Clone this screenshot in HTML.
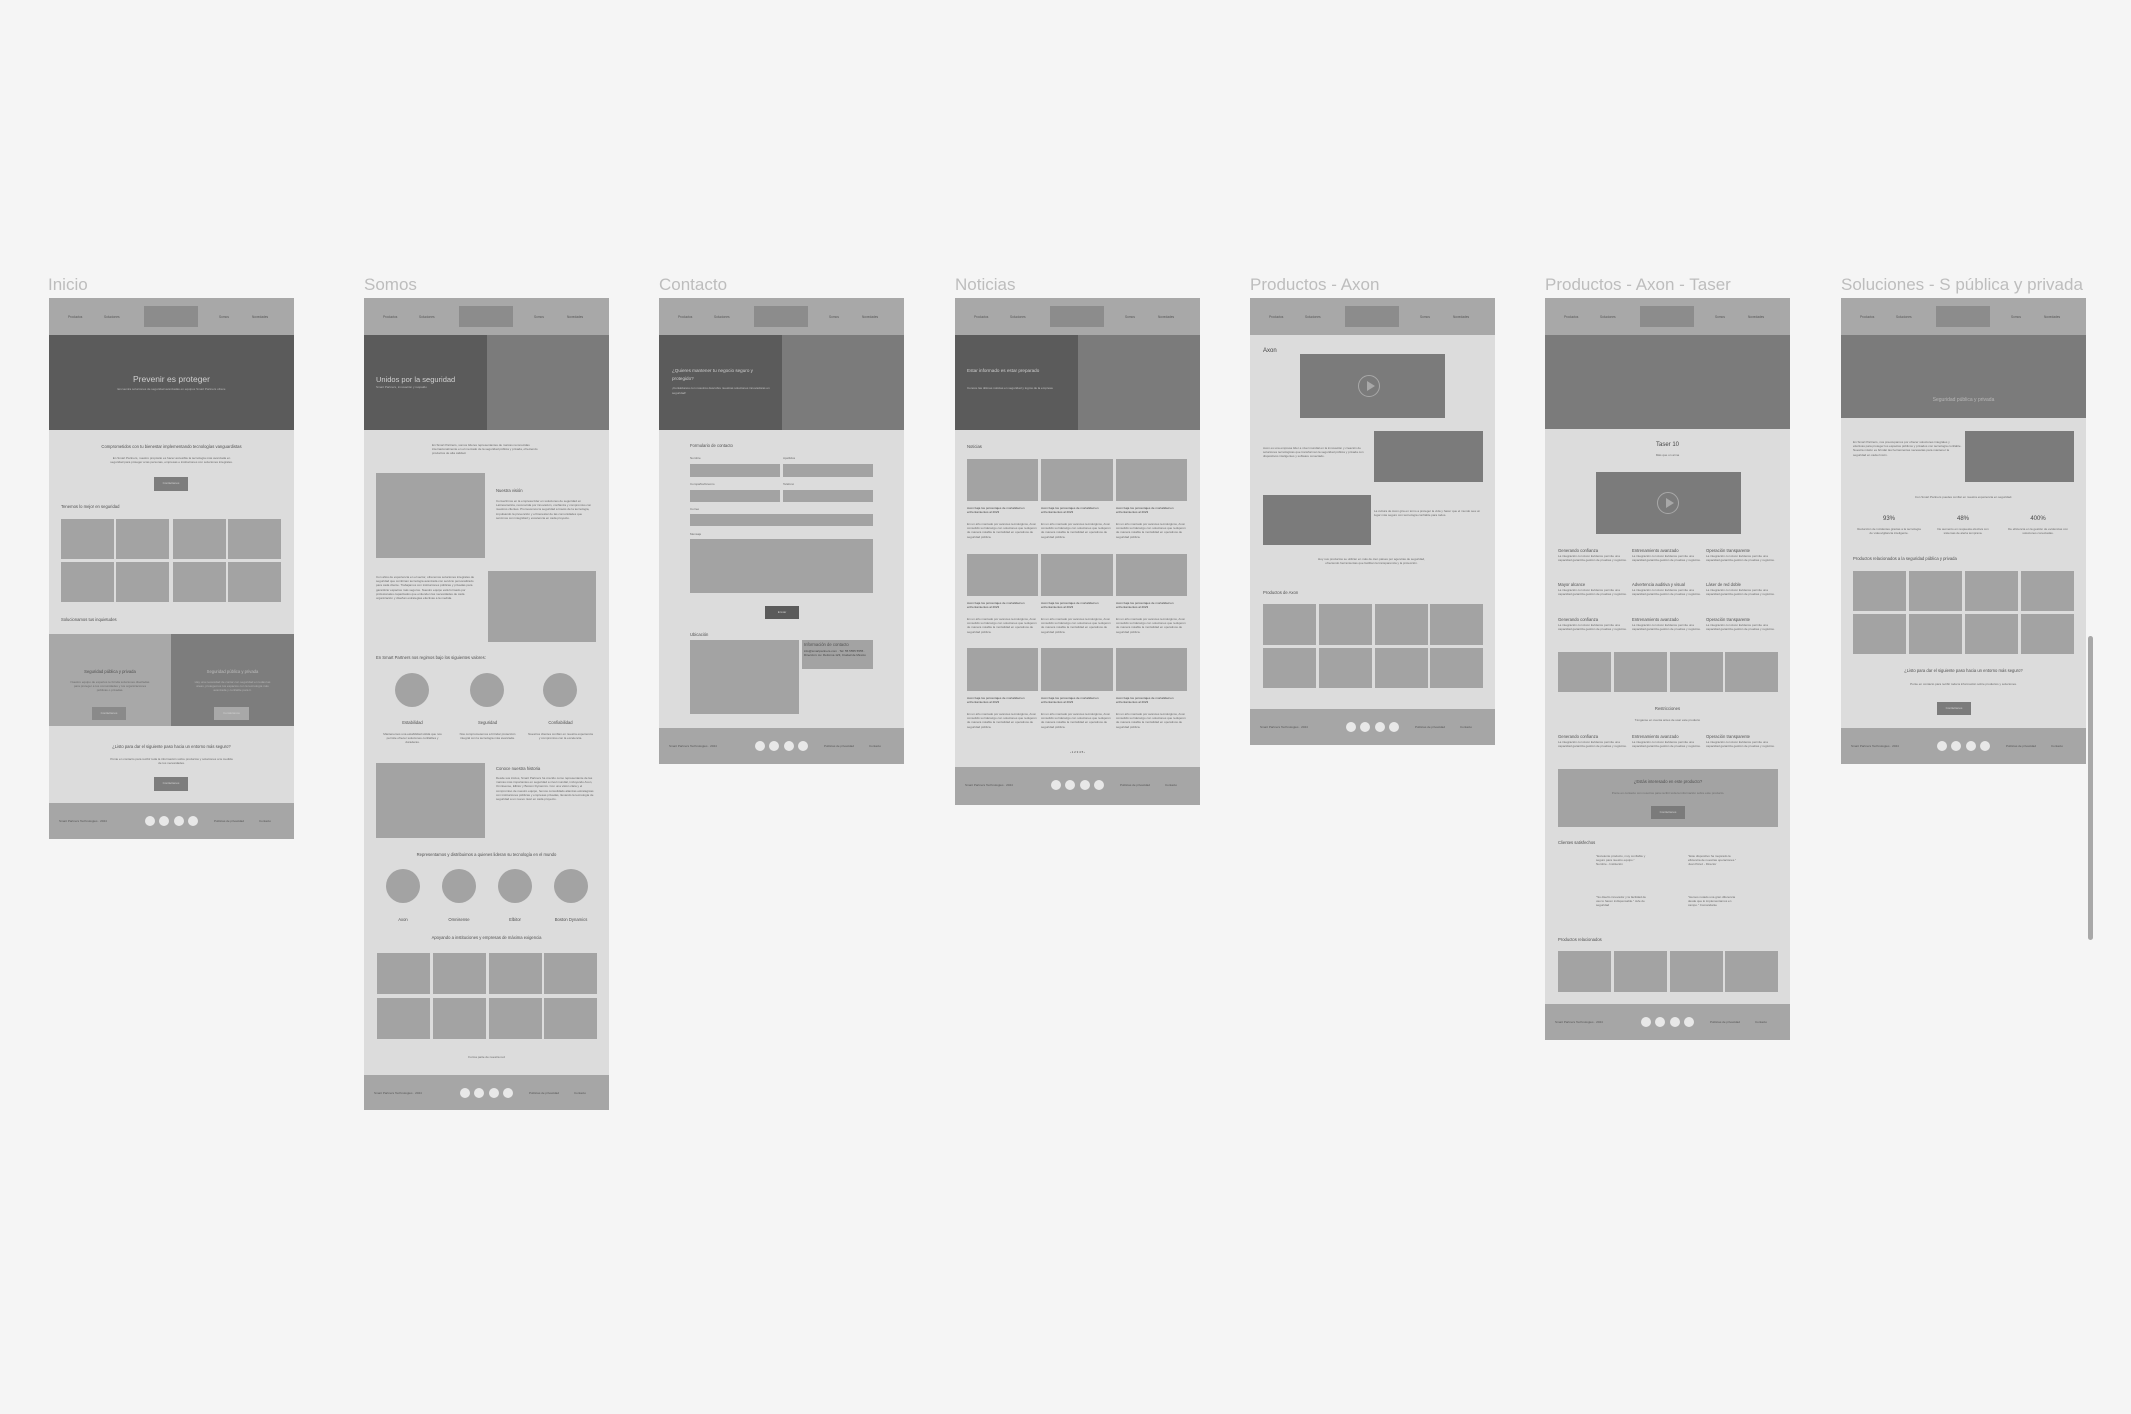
<!DOCTYPE html>
<html><head><meta charset="utf-8">
<style>
*{margin:0;padding:0;box-sizing:border-box}
body{width:2131px;height:1414px;background:#f5f5f5;position:relative;overflow:hidden;font-family:"Liberation Sans",sans-serif}
.a{position:absolute}
.lbl{position:absolute;top:275px;font-size:17px;color:#bdbdbd;white-space:nowrap}
.f{position:absolute;top:298px;width:245px;background:#dcdcdc;overflow:hidden}
.nav{position:absolute;left:0;top:0;width:245px;height:37px;background:#a8a8a8}
.nav .lg{position:absolute;left:95px;top:8px;width:54px;height:21px;background:#8c8c8c}
.nav span{position:absolute;top:17px;font-size:3.2px;color:#555;white-space:nowrap}
.ft{position:absolute;left:0;width:245px;height:36px;background:#a6a6a6}
.ft i{position:absolute;top:13px;width:10px;height:10px;border-radius:50%;background:#e8e8e8}
.ft span{position:absolute;top:16px;font-size:3px;color:#555;white-space:nowrap}
.t{position:absolute;font-size:3px;line-height:4.2px;color:#6a6a6a;overflow:hidden}
.c{text-align:center}
.h{position:absolute;font-size:4.2px;color:#505050;white-space:nowrap}
.b{position:absolute;background:#a3a3a3}
.d{position:absolute;background:#7b7b7b}
.btn{position:absolute;background:#7d7d7d;color:#d0d0d0;font-size:3px;text-align:center;line-height:13px;height:13px}
.cir{position:absolute;border-radius:50%;background:#a3a3a3}
.play{position:absolute;width:22px;height:22px;border-radius:50%;border:1.5px solid #a8a8a8}
.play:after{content:"";position:absolute;left:7.5px;top:5px;border-left:8px solid #a8a8a8;border-top:5px solid transparent;border-bottom:5px solid transparent}
</style></head><body>

<div class="lbl" style="left:48px">Inicio</div>
<div class="lbl" style="left:364px">Somos</div>
<div class="lbl" style="left:659px">Contacto</div>
<div class="lbl" style="left:955px">Noticias</div>
<div class="lbl" style="left:1250px">Productos - Axon</div>
<div class="lbl" style="left:1545px">Productos - Axon - Taser</div>
<div class="lbl" style="left:1841px">Soluciones - S pública y privada</div>

<div class="a" style="left:2088px;top:636px;width:5px;height:304px;border-radius:3px;background:#a8a8a8"></div>

<!-- INICIO -->
<div class="f" style="left:49px;height:541px">
 <div class="nav"><span style="left:19px">Productos</span><span style="left:55px">Soluciones</span><div class="lg"></div><span style="left:170px">Somos</span><span style="left:203px">Novedades</span></div>
 <div class="a" style="left:0;top:37px;width:245px;height:95px;background:#5b5b5b"></div>
 <div class="a c" style="left:0;top:76px;width:245px;font-size:8.5px;color:#cfcfcf">Prevenir es proteger</div>
 <div class="a c" style="left:0;top:89px;width:245px;font-size:3px;color:#b8b8b8">Encuentra soluciones de seguridad avanzadas en equipos Smart Partners ofrece</div>
 <div class="h c" style="left:0;top:146px;width:245px">Comprometidos con tu bienestar implementando tecnologías vanguardistas</div>
 <div class="t c" style="left:60px;top:158px;width:125px;height:13px">En Smart Partners, nuestro propósito es hacer accesible la tecnología más avanzada en seguridad para proteger a las personas, empresas e instituciones con soluciones integrales.</div>
 <div class="btn" style="left:105px;top:179px;width:34px;height:14px">Contáctanos</div>
 <div class="h" style="left:12px;top:206px">Tenemos lo mejor en seguridad</div>
 <div class="b" style="left:12px;top:221px;width:53px;height:40px"></div><div class="b" style="left:67px;top:221px;width:53px;height:40px"></div><div class="b" style="left:124px;top:221px;width:53px;height:40px"></div><div class="b" style="left:179px;top:221px;width:53px;height:40px"></div>
 <div class="b" style="left:12px;top:264px;width:53px;height:40px"></div><div class="b" style="left:67px;top:264px;width:53px;height:40px"></div><div class="b" style="left:124px;top:264px;width:53px;height:40px"></div><div class="b" style="left:179px;top:264px;width:53px;height:40px"></div>
 <div class="h" style="left:12px;top:319px">Solucionamos tus inquietudes</div>
 <div class="a" style="left:0;top:336px;width:122px;height:92px;background:#a8a8a8"></div>
 <div class="a" style="left:122px;top:336px;width:123px;height:92px;background:#7d7d7d"></div>
 <div class="h c" style="left:0;top:371px;width:122px">Seguridad pública y privada</div>
 <div class="t c" style="left:20px;top:382px;width:82px;height:17px">Nuestro equipo de expertos te brinda soluciones diseñadas para proteger a tus comunidades y tus organizaciones públicas o privadas.</div>
 <div class="btn" style="left:43px;top:409px;width:34px;background:#8a8a8a">Contáctanos</div>
 <div class="h c" style="left:122px;top:371px;width:123px;color:#bcbcbc">Seguridad pública y privada</div>
 <div class="t c" style="left:142px;top:382px;width:83px;height:17px;color:#b5b5b5">Hay una necesidad de contar con seguridad en todas las áreas, protegemos tus espacios con la tecnología más avanzada y confiable para ti.</div>
 <div class="btn" style="left:165px;top:409px;width:35px;background:#a8a8a8">Contáctanos</div>
 <div class="h c" style="left:0;top:446px;width:245px">¿Listo para dar el siguiente paso hacia un entorno más seguro?</div>
 <div class="t c" style="left:60px;top:459px;width:125px;height:9px">Ponte en contacto para recibir toda la información sobre productos y soluciones a la medida de tus necesidades.</div>
 <div class="btn" style="left:105px;top:479px;width:34px;height:14px">Contáctanos</div>
 <div class="ft" style="top:505px"><span style="left:10px">Smart Partners Technologies · 2024</span><i style="left:96px"></i><i style="left:110px"></i><i style="left:125px"></i><i style="left:139px"></i><span style="left:165px">Políticas de privacidad</span><span style="left:210px">Contacto</span></div>
</div>

<!-- SOMOS -->
<div class="f" style="left:364px;height:812px">
 <div class="nav"><span style="left:19px">Productos</span><span style="left:55px">Soluciones</span><div class="lg"></div><span style="left:170px">Somos</span><span style="left:203px">Novedades</span></div>
 <div class="a" style="left:0;top:37px;width:123px;height:95px;background:#5b5b5b"></div>
 <div class="a" style="left:123px;top:37px;width:122px;height:95px;background:#7b7b7b"></div>
 <div class="a" style="left:12px;top:77px;font-size:7.5px;color:#d0d0d0;white-space:nowrap">Unidos por la seguridad</div>
 <div class="a" style="left:12px;top:87px;font-size:3px;color:#bbb">Smart Partners, innovación y respaldo</div>
 <div class="t" style="left:68px;top:145px;width:110px;height:18px">En Smart Partners, somos líderes representantes de marcas reconocidas internacionalmente en el mercado de la seguridad pública y privada, ofreciendo productos de alta calidad.</div>
 <div class="b" style="left:12px;top:175px;width:109px;height:85px"></div>
 <div class="h" style="left:132px;top:190px">Nuestra visión</div>
 <div class="t" style="left:132px;top:201px;width:98px;height:47px">Convertirnos en la empresa líder en soluciones de seguridad en Latinoamérica, reconocida por innovación, confianza y compromiso con nuestros clientes. Promovemos la seguridad a través de la tecnología, impulsando la prevención y el bienestar de las comunidades que servimos con integridad y excelencia en cada proyecto.</div>
 <div class="t" style="left:12px;top:277px;width:100px;height:62px">Con años de experiencia en el sector, ofrecemos soluciones integrales de seguridad que combinan tecnología avanzada con servicio personalizado para cada cliente. Trabajamos con instituciones públicas y privadas para garantizar espacios más seguros. Nuestro equipo está formado por profesionales capacitados que entienden las necesidades de cada organización y diseñan estrategias efectivas a la medida.</div>
 <div class="b" style="left:124px;top:273px;width:108px;height:71px"></div>
 <div class="h" style="left:12px;top:357px">En Smart Partners nos regimos bajo los siguientes valores:</div>
 <div class="cir" style="left:31px;top:375px;width:34px;height:34px"></div><div class="cir" style="left:106px;top:375px;width:34px;height:34px"></div><div class="cir" style="left:179px;top:375px;width:34px;height:34px"></div>
 <div class="h c" style="left:16px;top:422px;width:65px">Estabilidad</div><div class="h c" style="left:91px;top:422px;width:65px">Seguridad</div><div class="h c" style="left:164px;top:422px;width:65px">Confiabilidad</div>
 <div class="t c" style="left:16px;top:434px;width:65px;height:17px">Mantenemos una estabilidad sólida que nos permite ofrecer soluciones confiables y duraderas.</div>
 <div class="t c" style="left:91px;top:434px;width:65px;height:17px">Nos comprometemos a brindar protección integral con la tecnología más avanzada.</div>
 <div class="t c" style="left:164px;top:434px;width:65px;height:17px">Nuestros clientes confían en nuestra experiencia y compromiso con la excelencia.</div>
 <div class="b" style="left:12px;top:465px;width:109px;height:75px"></div>
 <div class="h" style="left:132px;top:468px">Conoce nuestra historia</div>
 <div class="t" style="left:132px;top:478px;width:98px;height:58px">Desde sus inicios, Smart Partners ha crecido como representante de las marcas más importantes en seguridad a nivel mundial, incluyendo Axon, Omnisense, Elbitor y Boston Dynamics. Con una visión clara y el compromiso de nuestro equipo, hemos consolidado alianzas estratégicas con instituciones públicas y empresas privadas, llevando la tecnología de seguridad a un nuevo nivel en cada proyecto.</div>
 <div class="h c" style="left:0;top:554px;width:245px">Representamos y distribuimos a quienes lideran su tecnología en el mundo</div>
 <div class="cir" style="left:22px;top:571px;width:34px;height:34px"></div><div class="cir" style="left:78px;top:571px;width:34px;height:34px"></div><div class="cir" style="left:134px;top:571px;width:34px;height:34px"></div><div class="cir" style="left:190px;top:571px;width:34px;height:34px"></div>
 <div class="h c" style="left:9px;top:619px;width:60px">Axon</div><div class="h c" style="left:65px;top:619px;width:60px">Omnisense</div><div class="h c" style="left:121px;top:619px;width:60px">Elbitor</div><div class="h c" style="left:177px;top:619px;width:60px">Boston Dynamics</div>
 <div class="h c" style="left:0;top:637px;width:245px">Apoyando a instituciones y empresas de máxima exigencia</div>
 <div class="b" style="left:13px;top:655px;width:53px;height:41px"></div><div class="b" style="left:69px;top:655px;width:53px;height:41px"></div><div class="b" style="left:125px;top:655px;width:53px;height:41px"></div><div class="b" style="left:180px;top:655px;width:53px;height:41px"></div>
 <div class="b" style="left:13px;top:700px;width:53px;height:41px"></div><div class="b" style="left:69px;top:700px;width:53px;height:41px"></div><div class="b" style="left:125px;top:700px;width:53px;height:41px"></div><div class="b" style="left:180px;top:700px;width:53px;height:41px"></div>
 <div class="t c" style="left:0;top:757px;width:245px;height:5px">Forma parte de nuestra red</div>
 <div class="ft" style="top:777px"><span style="left:10px">Smart Partners Technologies · 2024</span><i style="left:96px"></i><i style="left:110px"></i><i style="left:125px"></i><i style="left:139px"></i><span style="left:165px">Políticas de privacidad</span><span style="left:210px">Contacto</span></div>
</div>

<!-- CONTACTO -->
<div class="f" style="left:659px;height:466px">
 <div class="nav"><span style="left:19px">Productos</span><span style="left:55px">Soluciones</span><div class="lg"></div><span style="left:170px">Somos</span><span style="left:203px">Novedades</span></div>
 <div class="a" style="left:0;top:37px;width:123px;height:95px;background:#5b5b5b"></div>
 <div class="a" style="left:123px;top:37px;width:122px;height:95px;background:#7b7b7b"></div>
 <div class="a" style="left:13px;top:69px;width:100px;font-size:4.6px;line-height:7.5px;color:#d0d0d0">¿Quieres mantener tu negocio seguro y protegido?</div>
 <div class="a" style="left:13px;top:88px;width:100px;font-size:3px;line-height:5px;color:#c0c0c0">¡Contáctanos con nosotros descubre nuestras soluciones innovadoras en seguridad!</div>
 <div class="h" style="left:31px;top:145px">Formulario de contacto</div>
 <div class="t" style="left:31px;top:158px">Nombre</div><div class="t" style="left:124px;top:158px">Apellidos</div>
 <div class="b" style="left:31px;top:166px;width:90px;height:13px"></div><div class="b" style="left:124px;top:166px;width:90px;height:13px"></div>
 <div class="t" style="left:31px;top:184px">Compañía/Gremio</div><div class="t" style="left:124px;top:184px">Teléfono</div>
 <div class="b" style="left:31px;top:192px;width:90px;height:12px"></div><div class="b" style="left:124px;top:192px;width:90px;height:12px"></div>
 <div class="t" style="left:31px;top:209px">Correo</div>
 <div class="b" style="left:31px;top:216px;width:183px;height:12px"></div>
 <div class="t" style="left:31px;top:234px">Mensaje</div>
 <div class="b" style="left:31px;top:241px;width:183px;height:54px"></div>
 <div class="btn" style="left:106px;top:308px;width:34px;background:#5b5b5b">Enviar</div>
 <div class="h" style="left:31px;top:334px">Ubicación</div>
 <div class="b" style="left:31px;top:342px;width:109px;height:74px"></div>
 <div class="b" style="left:143px;top:342px;width:71px;height:29px"></div>
 <div class="h" style="left:145px;top:344px">Información de contacto</div>
 <div class="t" style="left:145px;top:351px;width:66px;height:17px;color:#444">info@smartpartners.com · Tel: 55 5555 5555 · Dirección: Av. Reforma 123, Ciudad de México</div>
 <div class="ft" style="top:430px"><span style="left:10px">Smart Partners Technologies · 2024</span><i style="left:96px"></i><i style="left:110px"></i><i style="left:125px"></i><i style="left:139px"></i><span style="left:165px">Políticas de privacidad</span><span style="left:210px">Contacto</span></div>
</div>

<!-- NOTICIAS -->
<div class="f" style="left:955px;height:507px">
 <div class="nav"><span style="left:19px">Productos</span><span style="left:55px">Soluciones</span><div class="lg"></div><span style="left:170px">Somos</span><span style="left:203px">Novedades</span></div>
 <div class="a" style="left:0;top:37px;width:123px;height:95px;background:#5b5b5b"></div>
 <div class="a" style="left:123px;top:37px;width:122px;height:95px;background:#7b7b7b"></div>
 <div class="a" style="left:12px;top:69px;width:100px;font-size:4.6px;line-height:7.5px;color:#d0d0d0">Estar informado es estar preparado</div>
 <div class="a" style="left:12px;top:88px;width:100px;font-size:3px;line-height:5px;color:#c0c0c0">Conoce las últimas noticias en seguridad y logros de la empresa</div>
 <div class="h" style="left:12px;top:146px">Noticias</div>

 <div class="b" style="left:12px;top:161px;width:71px;height:42px"></div><div class="b" style="left:86px;top:161px;width:72px;height:42px"></div><div class="b" style="left:161px;top:161px;width:71px;height:42px"></div>
 <div class="t" style="left:12px;top:208px;width:71px;height:13px;color:#444">Axon baja los porcentajes de mortalidad en enfrentamientos al 2023</div>
 <div class="t" style="left:86px;top:208px;width:72px;height:13px;color:#444">Axon baja los porcentajes de mortalidad en enfrentamientos al 2023</div>
 <div class="t" style="left:161px;top:208px;width:71px;height:13px;color:#444">Axon baja los porcentajes de mortalidad en enfrentamientos al 2023</div>
 <div class="t" style="left:12px;top:224px;width:71px;height:21px">En un año marcado por avances tecnológicos, Axon consolidó su liderazgo con soluciones que redujeron de manera notable la mortalidad en operativos de seguridad pública.</div>
 <div class="t" style="left:86px;top:224px;width:72px;height:21px">En un año marcado por avances tecnológicos, Axon consolidó su liderazgo con soluciones que redujeron de manera notable la mortalidad en operativos de seguridad pública.</div>
 <div class="t" style="left:161px;top:224px;width:71px;height:21px">En un año marcado por avances tecnológicos, Axon consolidó su liderazgo con soluciones que redujeron de manera notable la mortalidad en operativos de seguridad pública.</div>

 <div class="b" style="left:12px;top:256px;width:71px;height:42px"></div><div class="b" style="left:86px;top:256px;width:72px;height:42px"></div><div class="b" style="left:161px;top:256px;width:71px;height:42px"></div>
 <div class="t" style="left:12px;top:303px;width:71px;height:13px;color:#444">Axon baja los porcentajes de mortalidad en enfrentamientos al 2023</div>
 <div class="t" style="left:86px;top:303px;width:72px;height:13px;color:#444">Axon baja los porcentajes de mortalidad en enfrentamientos al 2023</div>
 <div class="t" style="left:161px;top:303px;width:71px;height:13px;color:#444">Axon baja los porcentajes de mortalidad en enfrentamientos al 2023</div>
 <div class="t" style="left:12px;top:319px;width:71px;height:21px">En un año marcado por avances tecnológicos, Axon consolidó su liderazgo con soluciones que redujeron de manera notable la mortalidad en operativos de seguridad pública.</div>
 <div class="t" style="left:86px;top:319px;width:72px;height:21px">En un año marcado por avances tecnológicos, Axon consolidó su liderazgo con soluciones que redujeron de manera notable la mortalidad en operativos de seguridad pública.</div>
 <div class="t" style="left:161px;top:319px;width:71px;height:21px">En un año marcado por avances tecnológicos, Axon consolidó su liderazgo con soluciones que redujeron de manera notable la mortalidad en operativos de seguridad pública.</div>

 <div class="b" style="left:12px;top:350px;width:71px;height:43px"></div><div class="b" style="left:86px;top:350px;width:72px;height:43px"></div><div class="b" style="left:161px;top:350px;width:71px;height:43px"></div>
 <div class="t" style="left:12px;top:398px;width:71px;height:13px;color:#444">Axon baja los porcentajes de mortalidad en enfrentamientos al 2023</div>
 <div class="t" style="left:86px;top:398px;width:72px;height:13px;color:#444">Axon baja los porcentajes de mortalidad en enfrentamientos al 2023</div>
 <div class="t" style="left:161px;top:398px;width:71px;height:13px;color:#444">Axon baja los porcentajes de mortalidad en enfrentamientos al 2023</div>
 <div class="t" style="left:12px;top:414px;width:71px;height:21px">En un año marcado por avances tecnológicos, Axon consolidó su liderazgo con soluciones que redujeron de manera notable la mortalidad en operativos de seguridad pública.</div>
 <div class="t" style="left:86px;top:414px;width:72px;height:21px">En un año marcado por avances tecnológicos, Axon consolidó su liderazgo con soluciones que redujeron de manera notable la mortalidad en operativos de seguridad pública.</div>
 <div class="t" style="left:161px;top:414px;width:71px;height:21px">En un año marcado por avances tecnológicos, Axon consolidó su liderazgo con soluciones que redujeron de manera notable la mortalidad en operativos de seguridad pública.</div>
 <div class="t c" style="left:0;top:452px;width:245px;color:#444">‹ 1 2 3 4 5 ›</div>
 <div class="ft" style="top:469px;height:38px"><span style="left:10px">Smart Partners Technologies · 2024</span><i style="left:96px"></i><i style="left:110px"></i><i style="left:125px"></i><i style="left:139px"></i><span style="left:165px">Políticas de privacidad</span><span style="left:210px">Contacto</span></div>
</div>

<!-- AXON -->
<div class="f" style="left:1250px;height:447px">
 <div class="nav"><span style="left:19px">Productos</span><span style="left:55px">Soluciones</span><div class="lg"></div><span style="left:170px">Somos</span><span style="left:203px">Novedades</span></div>
 <div class="a" style="left:13px;top:50px;font-size:6px;color:#444">Axon</div>
 <div class="d" style="left:50px;top:56px;width:145px;height:64px"></div>
 <div class="play" style="left:108px;top:77px"></div>
 <div class="t" style="left:13px;top:148px;width:108px;height:25px">Axon es una empresa líder a nivel mundial en la innovación y creación de soluciones tecnológicas que transforman la seguridad pública y privada con dispositivos inteligentes y software conectado.</div>
 <div class="d" style="left:124px;top:133px;width:109px;height:51px"></div>
 <div class="d" style="left:13px;top:197px;width:108px;height:50px"></div>
 <div class="t" style="left:124px;top:211px;width:107px;height:22px">La cultura de Axon gira en torno a proteger la vida y hacer que el mundo sea un lugar más seguro con tecnología confiable para todos.</div>
 <div class="t c" style="left:68px;top:259px;width:107px;height:21px">Hoy sus productos se utilizan en más de cien países por agencias de seguridad, ofreciendo herramientas que facilitan la transparencia y la protección.</div>
 <div class="h" style="left:13px;top:292px">Productos de Axon</div>
 <div class="b" style="left:13px;top:306px;width:53px;height:41px"></div><div class="b" style="left:69px;top:306px;width:53px;height:41px"></div><div class="b" style="left:125px;top:306px;width:53px;height:41px"></div><div class="b" style="left:180px;top:306px;width:53px;height:41px"></div>
 <div class="b" style="left:13px;top:350px;width:53px;height:40px"></div><div class="b" style="left:69px;top:350px;width:53px;height:40px"></div><div class="b" style="left:125px;top:350px;width:53px;height:40px"></div><div class="b" style="left:180px;top:350px;width:53px;height:40px"></div>
 <div class="ft" style="top:411px"><span style="left:10px">Smart Partners Technologies · 2024</span><i style="left:96px"></i><i style="left:110px"></i><i style="left:125px"></i><i style="left:139px"></i><span style="left:165px">Políticas de privacidad</span><span style="left:210px">Contacto</span></div>
</div>

<!-- TASER -->
<div class="f" style="left:1545px;height:742px">
 <div class="nav"><span style="left:19px">Productos</span><span style="left:55px">Soluciones</span><div class="lg"></div><span style="left:170px">Somos</span><span style="left:203px">Novedades</span></div>
 <div class="a" style="left:0;top:37px;width:245px;height:94px;background:#7b7b7b"></div>
 <div class="a c" style="left:0;top:144px;width:245px;font-size:6px;color:#444">Taser 10</div>
 <div class="t c" style="left:0;top:155px;width:245px">Más que un arma</div>
 <div class="d" style="left:51px;top:174px;width:145px;height:62px"></div>
 <div class="play" style="left:112px;top:194px"></div>

 <div class="h" style="left:13px;top:250px">Generando confianza</div><div class="h" style="left:87px;top:250px">Entrenamiento avanzado</div><div class="h" style="left:161px;top:250px">Operación transparente</div>
 <div class="t" style="left:13px;top:256px;width:70px;height:17px">La integración con Axon Evidence permite una capacidad garantiza gestión de pruebas y registros.</div>
 <div class="t" style="left:87px;top:256px;width:70px;height:17px">La integración con Axon Evidence permite una capacidad garantiza gestión de pruebas y registros.</div>
 <div class="t" style="left:161px;top:256px;width:70px;height:17px">La integración con Axon Evidence permite una capacidad garantiza gestión de pruebas y registros.</div>
 <div class="h" style="left:13px;top:284px">Mayor alcance</div><div class="h" style="left:87px;top:284px">Advertencia auditiva y visual</div><div class="h" style="left:161px;top:284px">Láser de red doble</div>
 <div class="t" style="left:13px;top:290px;width:70px;height:17px">La integración con Axon Evidence permite una capacidad garantiza gestión de pruebas y registros.</div>
 <div class="t" style="left:87px;top:290px;width:70px;height:17px">La integración con Axon Evidence permite una capacidad garantiza gestión de pruebas y registros.</div>
 <div class="t" style="left:161px;top:290px;width:70px;height:17px">La integración con Axon Evidence permite una capacidad garantiza gestión de pruebas y registros.</div>
 <div class="h" style="left:13px;top:319px">Generando confianza</div><div class="h" style="left:87px;top:319px">Entrenamiento avanzado</div><div class="h" style="left:161px;top:319px">Operación transparente</div>
 <div class="t" style="left:13px;top:325px;width:70px;height:17px">La integración con Axon Evidence permite una capacidad garantiza gestión de pruebas y registros.</div>
 <div class="t" style="left:87px;top:325px;width:70px;height:17px">La integración con Axon Evidence permite una capacidad garantiza gestión de pruebas y registros.</div>
 <div class="t" style="left:161px;top:325px;width:70px;height:17px">La integración con Axon Evidence permite una capacidad garantiza gestión de pruebas y registros.</div>

 <div class="b" style="left:13px;top:354px;width:53px;height:40px"></div><div class="b" style="left:69px;top:354px;width:53px;height:40px"></div><div class="b" style="left:125px;top:354px;width:53px;height:40px"></div><div class="b" style="left:180px;top:354px;width:53px;height:40px"></div>
 <div class="h c" style="left:0;top:408px;width:245px">Restricciones</div>
 <div class="t c" style="left:0;top:420px;width:245px">Ténganse en cuenta antes de usar este producto</div>
 <div class="h" style="left:13px;top:436px">Generando confianza</div><div class="h" style="left:87px;top:436px">Entrenamiento avanzado</div><div class="h" style="left:161px;top:436px">Operación transparente</div>
 <div class="t" style="left:13px;top:442px;width:70px;height:17px">La integración con Axon Evidence permite una capacidad garantiza gestión de pruebas y registros.</div>
 <div class="t" style="left:87px;top:442px;width:70px;height:17px">La integración con Axon Evidence permite una capacidad garantiza gestión de pruebas y registros.</div>
 <div class="t" style="left:161px;top:442px;width:70px;height:17px">La integración con Axon Evidence permite una capacidad garantiza gestión de pruebas y registros.</div>
 <div class="b" style="left:13px;top:471px;width:220px;height:58px"></div>
 <div class="h c" style="left:13px;top:481px;width:220px">¿Estás interesado en este producto?</div>
 <div class="t c" style="left:53px;top:493px;width:140px;height:9px">Ponte en contacto con nosotros para recibir toda la información sobre este producto.</div>
 <div class="btn" style="left:106px;top:508px;width:34px;background:#7b7b7b">Contáctanos</div>
 <div class="h" style="left:13px;top:542px">Clientes satisfechos</div>
 <div class="t" style="left:51px;top:556px;width:50px;height:26px">"Excelente producto, muy confiable y seguro para nuestro equipo." Nombre - Institución</div>
 <div class="t" style="left:143px;top:556px;width:50px;height:26px">"Este dispositivo ha mejorado la eficiencia de nuestras operaciones." Juan Pérez - Director</div>
 <div class="t" style="left:51px;top:597px;width:50px;height:22px">"Su diseño innovador y la facilidad de uso lo hacen indispensable." Jefe de seguridad</div>
 <div class="t" style="left:143px;top:597px;width:50px;height:28px">"Hemos notado una gran diferencia desde que lo implementamos en campo." Comandante</div>
 <div class="h" style="left:13px;top:639px">Productos relacionados</div>
 <div class="b" style="left:13px;top:653px;width:53px;height:41px"></div><div class="b" style="left:69px;top:653px;width:53px;height:41px"></div><div class="b" style="left:125px;top:653px;width:53px;height:41px"></div><div class="b" style="left:180px;top:653px;width:53px;height:41px"></div>
 <div class="ft" style="top:706px"><span style="left:10px">Smart Partners Technologies · 2024</span><i style="left:96px"></i><i style="left:110px"></i><i style="left:125px"></i><i style="left:139px"></i><span style="left:165px">Políticas de privacidad</span><span style="left:210px">Contacto</span></div>
</div>

<!-- SOLUCIONES -->
<div class="f" style="left:1841px;height:466px">
 <div class="nav"><span style="left:19px">Productos</span><span style="left:55px">Soluciones</span><div class="lg"></div><span style="left:170px">Somos</span><span style="left:203px">Novedades</span></div>
 <div class="a" style="left:0;top:37px;width:245px;height:83px;background:#7b7b7b"></div>
 <div class="a c" style="left:0;top:99px;width:245px;font-size:5px;color:#b8b8b8">Seguridad pública y privada</div>
 <div class="t" style="left:12px;top:142px;width:109px;height:35px">En Smart Partners, nos preocupamos por ofrecer soluciones integrales y efectivas para proteger los espacios públicos y privados con tecnología confiable. Nuestra misión es brindar las herramientas necesarias para mantener la seguridad en cada rincón.</div>
 <div class="d" style="left:124px;top:133px;width:109px;height:51px"></div>
 <div class="t c" style="left:60px;top:197px;width:125px;height:9px">Con Smart Partners puedes confiar en nuestra experiencia en seguridad.</div>
 <div class="a c" style="left:18px;top:218px;width:60px;font-size:6px;color:#444">93%</div>
 <div class="a c" style="left:92px;top:218px;width:60px;font-size:6px;color:#444">48%</div>
 <div class="a c" style="left:167px;top:218px;width:60px;font-size:6px;color:#444">400%</div>
 <div class="t c" style="left:16px;top:229px;width:64px;height:17px">Reducción de incidentes gracias a la tecnología de videovigilancia inteligente.</div>
 <div class="t c" style="left:90px;top:229px;width:64px;height:17px">De aumento en respuesta efectiva con sistemas de alerta temprana.</div>
 <div class="t c" style="left:165px;top:229px;width:64px;height:17px">De eficiencia en la gestión de evidencias con soluciones conectadas.</div>
 <div class="h" style="left:12px;top:258px">Productos relacionados a la seguridad pública y privada</div>
 <div class="b" style="left:12px;top:273px;width:53px;height:40px"></div><div class="b" style="left:68px;top:273px;width:53px;height:40px"></div><div class="b" style="left:124px;top:273px;width:53px;height:40px"></div><div class="b" style="left:180px;top:273px;width:53px;height:40px"></div>
 <div class="b" style="left:12px;top:316px;width:53px;height:40px"></div><div class="b" style="left:68px;top:316px;width:53px;height:40px"></div><div class="b" style="left:124px;top:316px;width:53px;height:40px"></div><div class="b" style="left:180px;top:316px;width:53px;height:40px"></div>
 <div class="h c" style="left:0;top:370px;width:245px">¿Listo para dar el siguiente paso hacia un entorno más seguro?</div>
 <div class="t c" style="left:60px;top:384px;width:125px;height:9px">Ponte en contacto para recibir toda la información sobre productos y soluciones.</div>
 <div class="btn" style="left:96px;top:404px;width:34px;background:#7b7b7b">Contáctanos</div>
 <div class="ft" style="top:430px"><span style="left:10px">Smart Partners Technologies · 2024</span><i style="left:96px"></i><i style="left:110px"></i><i style="left:125px"></i><i style="left:139px"></i><span style="left:165px">Políticas de privacidad</span><span style="left:210px">Contacto</span></div>
</div>

</body></html>
